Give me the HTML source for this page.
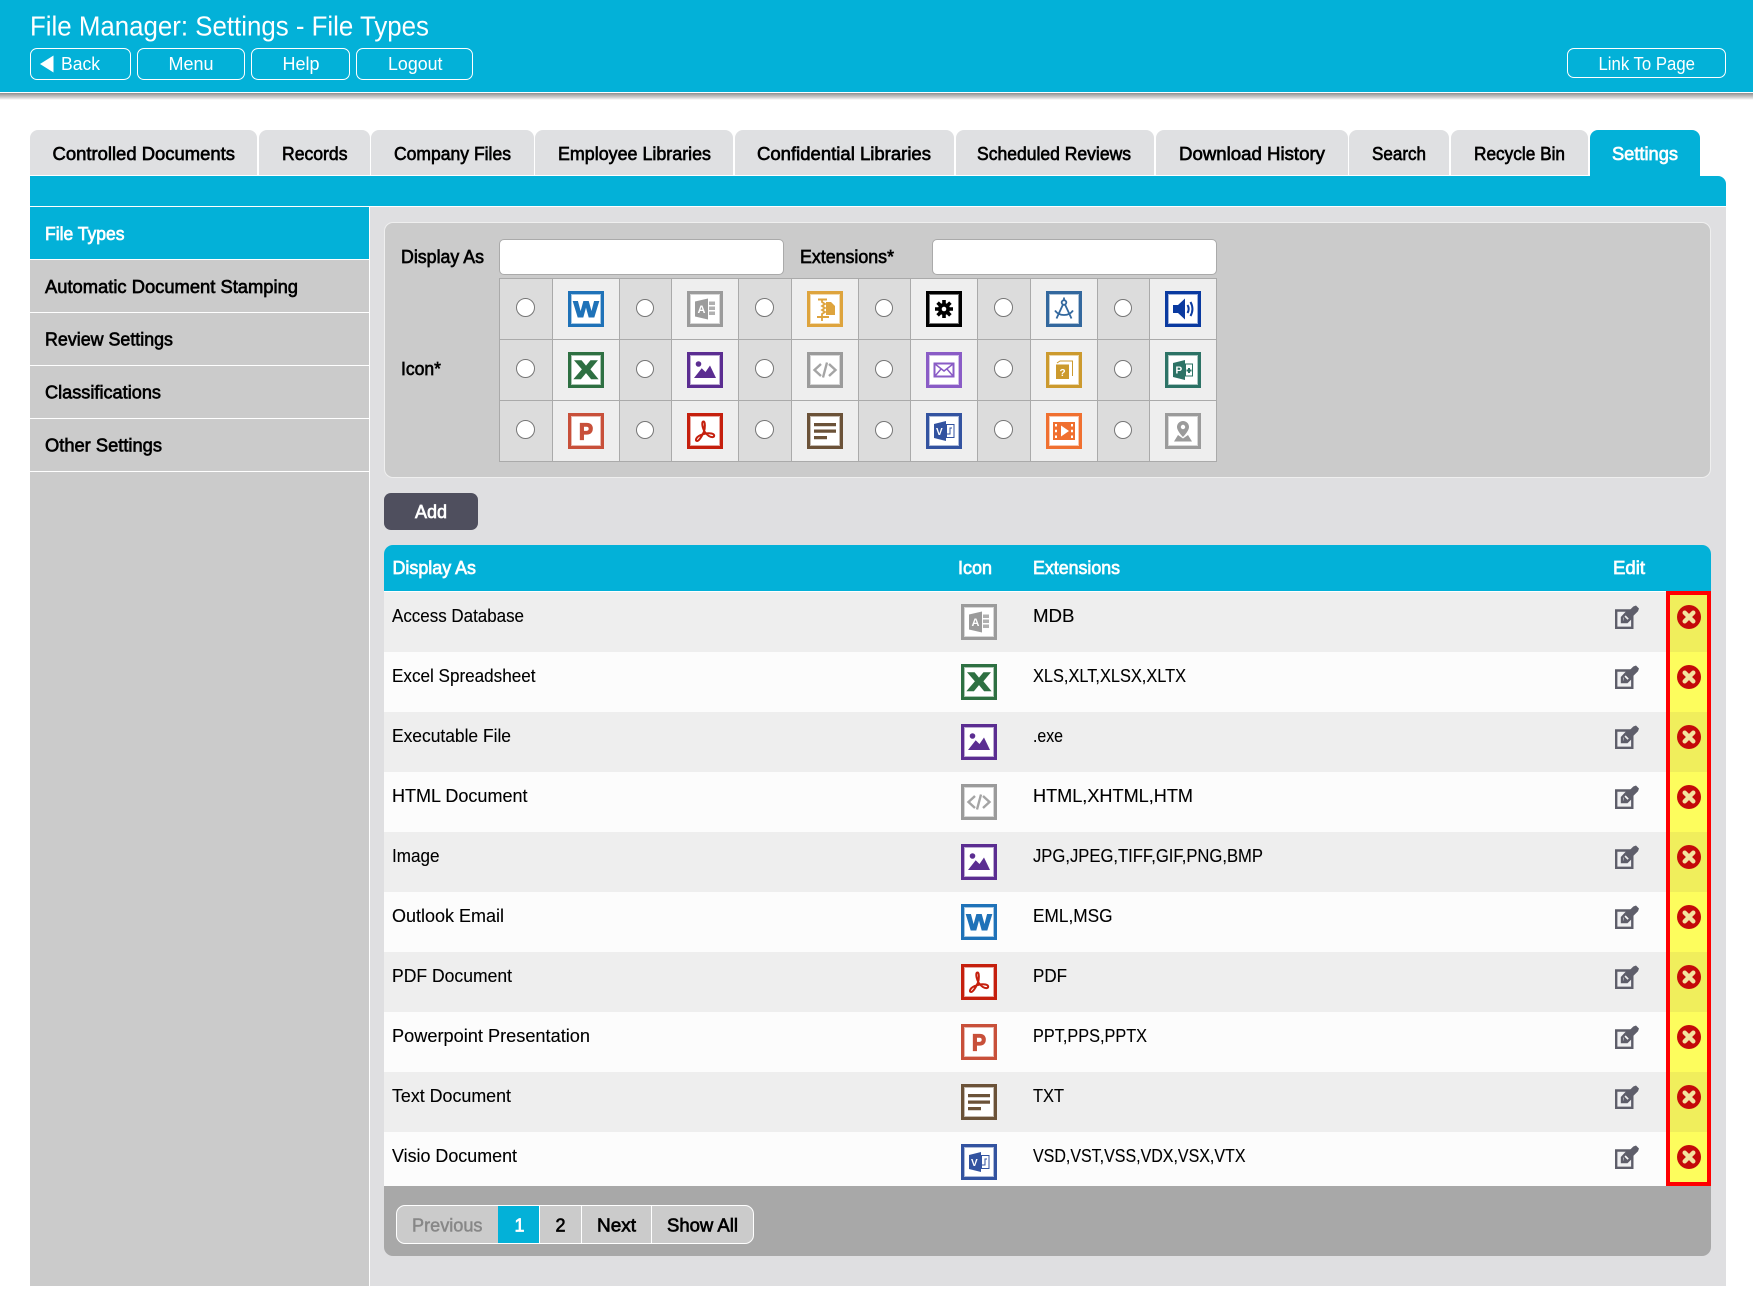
<!DOCTYPE html>
<html lang="en"><head><meta charset="utf-8"><title>File Manager: Settings - File Types</title>
<style>
html,body{margin:0;padding:0;background:#fff}
body{position:relative;width:1753px;height:1303px;overflow:hidden;font-family:"Liberation Sans",sans-serif}
.a{position:absolute;box-sizing:border-box}
.hb{border:1px solid #fff;border-radius:7px;top:48px;height:32px}
.tab{top:130px;height:45px;background:#dfe0e2;border-radius:8px 8px 0 0}
.side{left:30px;width:339px;height:53px;background:#cbcbcb;border-bottom:1px solid #fff}
.col{top:279px;height:182px;background:#dcdcdc}
.vl{top:278px;height:184px;width:1px;background:#aaa}
.hl{left:499px;width:718px;height:1px;background:#aaa}
input[type=text]{position:absolute;box-sizing:border-box;top:239px;height:36px;background:#fff;border:1px solid #aaa;border-radius:5px;margin:0;padding:0}
input[type=radio]{position:absolute;margin:0}
#o{position:absolute;left:0;top:0;z-index:5}
text{font-family:"Liberation Sans",sans-serif;font-size:18px;fill:#000;white-space:pre}
.w{fill:#fff}
.t{font-size:18.5px}
.s{stroke:#000;stroke-width:.65px}
.sw{fill:#fff;stroke:#fff;stroke-width:.7px}
.hw{fill:#fff;font-size:18.5px}
.g{font-weight:bold;font-size:10px}
.b{stroke:#000;stroke-width:.12px}
</style></head><body>

<div class="a" style="left:0;top:0;width:1753px;height:92px;background:#03b1d8"></div>
<div class="a" style="left:0;top:92px;width:1753px;height:1px;background:#fff"></div>
<div class="a" style="left:0;top:93px;width:1753px;height:7px;background:linear-gradient(#8f8f8f,#d8d8d8 70%,#fff)"></div>

<div class="a hb" style="left:30px;width:101px"></div>
<div class="a hb" style="left:137px;width:108px"></div>
<div class="a hb" style="left:251px;width:99px"></div>
<div class="a hb" style="left:356px;width:117px"></div>
<div class="a hb" style="left:1567px;width:159px;height:30px"></div>

<div class="a tab" style="left:30px;width:227px"></div>
<div class="a tab" style="left:259px;width:111px"></div>
<div class="a tab" style="left:371px;width:163px"></div>
<div class="a tab" style="left:535px;width:198px"></div>
<div class="a tab" style="left:735px;width:219px"></div>
<div class="a tab" style="left:956px;width:198px"></div>
<div class="a tab" style="left:1156px;width:192px"></div>
<div class="a tab" style="left:1349px;width:100px"></div>
<div class="a tab" style="left:1451px;width:137px"></div>
<div class="a tab" style="left:1590px;width:110px;height:47px;background:#03b1d8"></div>

<div class="a" style="left:30px;top:176px;width:1696px;height:30px;background:#03b1d8;border-radius:0 8px 0 0"></div>
<div class="a" style="left:30px;top:207px;width:1696px;height:1079px;background:#dfdfe1"></div>
<div class="a" style="left:30px;top:207px;width:339px;height:1079px;background:#cbcbcb"></div>
<div class="a" style="left:369px;top:207px;width:1px;height:1079px;background:#fff"></div>

<div class="a side" style="top:207px;background:#03b1d8"></div>
<div class="a side" style="top:260px"></div>
<div class="a side" style="top:313px"></div>
<div class="a side" style="top:366px"></div>
<div class="a side" style="top:419px"></div>

<div class="a" style="left:384px;top:222px;width:1327px;height:256px;background:#cbcbcb;border:1px solid #efefef;border-radius:9px"></div>
<input type="text" style="left:499px;width:285px">
<input type="text" style="left:932px;width:285px">

<div class="a" style="left:499px;top:278px;width:718px;height:184px;background:#eee"></div>
<div class="a col" style="left:499px;width:53px"></div>
<div class="a col" style="left:619px;width:52px"></div>
<div class="a col" style="left:738px;width:53px"></div>
<div class="a col" style="left:858px;width:52px"></div>
<div class="a col" style="left:977px;width:53px"></div>
<div class="a col" style="left:1097px;width:52px"></div>
<div class="a vl" style="left:499px"></div><div class="a vl" style="left:552px"></div><div class="a vl" style="left:619px"></div><div class="a vl" style="left:671px"></div><div class="a vl" style="left:738px"></div><div class="a vl" style="left:791px"></div><div class="a vl" style="left:858px"></div><div class="a vl" style="left:910px"></div><div class="a vl" style="left:977px"></div><div class="a vl" style="left:1030px"></div><div class="a vl" style="left:1097px"></div><div class="a vl" style="left:1149px"></div><div class="a vl" style="left:1216px"></div>
<div class="a hl" style="top:278px"></div><div class="a hl" style="top:339px"></div><div class="a hl" style="top:400px"></div><div class="a hl" style="top:461px"></div>

<input type="radio" name="i" style="left:516px;top:298px;width:19px;height:19px"><input type="radio" name="i" style="left:636px;top:299px;width:18px;height:18px"><input type="radio" name="i" style="left:755px;top:298px;width:19px;height:19px"><input type="radio" name="i" style="left:875px;top:299px;width:18px;height:18px"><input type="radio" name="i" style="left:994px;top:298px;width:19px;height:19px"><input type="radio" name="i" style="left:1114px;top:299px;width:18px;height:18px">
<input type="radio" name="i" style="left:516px;top:359px;width:19px;height:19px"><input type="radio" name="i" style="left:636px;top:360px;width:18px;height:18px"><input type="radio" name="i" style="left:755px;top:359px;width:19px;height:19px"><input type="radio" name="i" style="left:875px;top:360px;width:18px;height:18px"><input type="radio" name="i" style="left:994px;top:359px;width:19px;height:19px"><input type="radio" name="i" style="left:1114px;top:360px;width:18px;height:18px">
<input type="radio" name="i" style="left:516px;top:420px;width:19px;height:19px"><input type="radio" name="i" style="left:636px;top:421px;width:18px;height:18px"><input type="radio" name="i" style="left:755px;top:420px;width:19px;height:19px"><input type="radio" name="i" style="left:875px;top:421px;width:18px;height:18px"><input type="radio" name="i" style="left:994px;top:420px;width:19px;height:19px"><input type="radio" name="i" style="left:1114px;top:421px;width:18px;height:18px">

<div class="a" style="left:384px;top:493px;width:94px;height:37px;background:#4f4f5e;border-radius:7px"></div>

<div class="a" style="left:384px;top:545px;width:1327px;height:46px;background:#03b1d8;border-radius:9px 9px 0 0"></div>
<div class="a" style="left:384px;top:591px;width:1327px;height:1px;background:#fff"></div>
<div class="a" style="left:384px;top:592px;width:1327px;height:594px;background:linear-gradient(#eee 50%,#fcfcfc 50%) 0 0/100% 120px"></div>
<div class="a" style="left:1666px;top:591px;width:45px;height:595px;border:4px solid #f00;background:linear-gradient(#f0ee5c 50%,#fdfd5d 50%) 0 -3px/100% 120px"></div>
<div class="a" style="left:384px;top:1186px;width:1327px;height:70px;background:#a8a8a8;border-radius:0 0 9px 9px"></div>
<div class="a" style="left:396px;top:1205px;width:358px;height:39px;background:#cbcbcb;border:1px solid #fff;border-radius:9px"></div>
<div class="a" style="left:498px;top:1206px;width:41px;height:37px;background:#03b1d8"></div>
<div class="a" style="left:539px;top:1206px;width:1px;height:37px;background:#fff"></div>
<div class="a" style="left:581px;top:1206px;width:1px;height:37px;background:#fff"></div>
<div class="a" style="left:651px;top:1206px;width:1px;height:37px;background:#fff"></div>

<svg id="o" width="1753" height="1303" viewBox="0 0 1753 1303" xmlns="http://www.w3.org/2000/svg">
<defs>
<symbol id="word" viewBox="0 0 36 36"><rect x="1.5" y="1.5" width="33" height="33" fill="#fff" stroke="#1f72b8" stroke-width="3"/><rect x="3.5" y="3.5" width="29" height="29" fill="none" stroke="#1f72b8" stroke-opacity=".4"/><text x="5.500" y="26" textLength="25" lengthAdjust="spacingAndGlyphs" style="font-size:22px;font-weight:bold;fill:#1f72b8;stroke:#1f72b8;stroke-width:1.100px">W</text></symbol>
<symbol id="access" viewBox="0 0 36 36"><rect x="1.5" y="1.5" width="33" height="33" fill="#fff" stroke="#9b9b9b" stroke-width="3"/><rect x="3.5" y="3.5" width="29" height="29" fill="none" stroke="#9b9b9b" stroke-opacity=".4"/><path d="M8 10.500l13-3v21l-13-3z" fill="#9b9b9b"/><text x="10.500" y="22" style="font-weight:bold;font-size:11px;fill:#fff">A</text><path d="M22 10.500h6v3.500h-6zM22 15.500h6v3.500h-6zM22 20.500h6v3.500h-6z" fill="#b0b0b0"/></symbol>
<symbol id="zip" viewBox="0 0 36 36"><rect x="1.5" y="1.500" width="33" height="33" fill="#fff" stroke="#dea43d" stroke-width="3"/><rect x="3.500" y="3.500" width="29" height="29" fill="none" stroke="#dea43d" stroke-opacity=".4"/><path d="M11 7.500h9v2h-9zM10 25h12v2H10z" fill="#dea43d"/><path d="M15 9.500v1.500l3 2-3 2 3 2-3 2 3 2-3 2v7" fill="none" stroke="#dea43d" stroke-width="1.800"/><path d="M19 11h5l4 4v9h-9z" fill="#dea43d"/></symbol>
<symbol id="exe" viewBox="0 0 36 36"><rect x="1.500" y="1.500" width="33" height="33" fill="#fff" stroke="#000" stroke-width="3"/><rect x="3.500" y="3.500" width="29" height="29" fill="none" stroke="#777"/><circle cx="18" cy="18" r="6" fill="#000"/><path d="M18 9v18M9 18h18M11.600 11.600l12.800 12.800M24.400 11.600l-12.800 12.800" stroke="#000" stroke-width="3.600"/><circle cx="18" cy="18" r="2.300" fill="#fff"/></symbol>
<symbol id="cad" viewBox="0 0 36 36"><rect x="1.500" y="1.500" width="33" height="33" fill="#fff" stroke="#33689e" stroke-width="3"/><rect x="3.500" y="3.500" width="29" height="29" fill="none" stroke="#33689e" stroke-opacity=".4"/><g fill="none" stroke="#33689e" stroke-width="1.800"><circle cx="18" cy="11.500" r="2.300"/><path d="M17 13.500l-6.500 14M19 13.500l6.500 14M9 19.500c2 3 5 4.500 9 4.500s7-1.500 9-4.500M18 6.500v2.500"/></g></symbol>
<symbol id="audio" viewBox="0 0 36 36"><rect x="1.500" y="1.500" width="33" height="33" fill="#fff" stroke="#0a3aa0" stroke-width="3"/><rect x="3.500" y="3.500" width="29" height="29" fill="none" stroke="#0a3aa0" stroke-opacity=".4"/><path d="M8 14h5l7-6.500v21l-7-6.500H8z" fill="#0a3aa0"/><path d="M22.500 14c1.500 2.500 1.500 5.500 0 8M25.500 11c2.500 4.500 2.500 9.500 0 14" fill="none" stroke="#0a3aa0" stroke-width="2"/></symbol>
<symbol id="excel" viewBox="0 0 36 36"><rect x="1.500" y="1.500" width="33" height="33" fill="#fff" stroke="#2e7042" stroke-width="3"/><rect x="3.500" y="3.500" width="29" height="29" fill="none" stroke="#2e7042" stroke-opacity=".4"/><text x="7" y="26.500" textLength="22" lengthAdjust="spacingAndGlyphs" style="font-size:25px;font-weight:bold;fill:#2e7042;stroke:#2e7042;stroke-width:1.600px">X</text></symbol>
<symbol id="image" viewBox="0 0 36 36"><rect x="1.500" y="1.500" width="33" height="33" fill="#fff" stroke="#5b2d91" stroke-width="3"/><rect x="3.500" y="3.500" width="29" height="29" fill="none" stroke="#5b2d91" stroke-opacity=".4"/><circle cx="11.500" cy="12" r="2.800" fill="#5b2d91"/><path d="M7 26l7.700-9.700 3.800 3.700 4.500-6.500 6 12.500z" fill="#5b2d91"/></symbol>
<symbol id="code" viewBox="0 0 36 36"><rect x="1.500" y="1.500" width="33" height="33" fill="#fff" stroke="#9b9b9b" stroke-width="3"/><rect x="3.500" y="3.500" width="29" height="29" fill="none" stroke="#9b9b9b" stroke-opacity=".4"/><path d="M14 12l-6.500 6 6.500 6M22 12l6.500 6-6.500 6M20 10.500l-4 15" fill="none" stroke="#a5a5a5" stroke-width="2.400"/></symbol>
<symbol id="mail" viewBox="0 0 36 36"><rect x="1.500" y="1.500" width="33" height="33" fill="#fff" stroke="#8a5cc6" stroke-width="3"/><rect x="3.500" y="3.500" width="29" height="29" fill="none" stroke="#8a5cc6" stroke-opacity=".4"/><rect x="8.500" y="11.500" width="19" height="13" fill="none" stroke="#8a5cc6" stroke-width="2"/><path d="M9 12l9 7 9-7M9 24l6.500-7.500M27 24l-6.500-7.500" fill="none" stroke="#8a5cc6" stroke-width="1.500"/></symbol>
<symbol id="help" viewBox="0 0 36 36"><rect x="1.500" y="1.500" width="33" height="33" fill="#fff" stroke="#cc9a2e" stroke-width="3"/><rect x="3.500" y="3.500" width="29" height="29" fill="none" stroke="#cc9a2e" stroke-opacity=".4"/><path d="M10 12.500h13V27H10z" fill="#cc9a2e"/><path d="M11 11l3-2h12.500v15" fill="none" stroke="#cc9a2e"/><text x="13.500" y="24" class="g" style="fill:#fff">?</text></symbol>
<symbol id="project" viewBox="0 0 36 36"><rect x="1.500" y="1.500" width="33" height="33" fill="#fff" stroke="#2d7366" stroke-width="3"/><rect x="3.500" y="3.500" width="29" height="29" fill="none" stroke="#2d7366" stroke-opacity=".4"/><path d="M8 11l12-3v20l-12-3z" fill="#2d7366"/><rect x="20.500" y="12" width="7" height="12" fill="none" stroke="#2d7366"/><path d="M21.500 18.500h5M24 16v5" stroke="#2d7366" stroke-width="2"/><text x="10.500" y="21.500" class="g" style="fill:#fff">P</text></symbol>
<symbol id="ppt" viewBox="0 0 36 36"><rect x="1.500" y="1.500" width="33" height="33" fill="#fff" stroke="#c8503a" stroke-width="3"/><rect x="3.500" y="3.500" width="29" height="29" fill="none" stroke="#c8503a" stroke-opacity=".4"/><text x="11" y="26.500" textLength="14" lengthAdjust="spacingAndGlyphs" style="font-size:23px;font-weight:bold;fill:#c8503a;stroke:#c8503a;stroke-width:1.200px">P</text></symbol>
<symbol id="pdf" viewBox="0 0 36 36"><rect x="1.500" y="1.500" width="33" height="33" fill="#fff" stroke="#c51f0d" stroke-width="3"/><rect x="3.500" y="3.500" width="29" height="29" fill="none" stroke="#c51f0d" stroke-opacity=".4"/><path d="M16.500 8.500c-2 0-1.500 5 1 10 2.500 4 6 6 8.500 5.500 2-.5 1.500-3-1.500-3.500-5-.8-11 1-14 3.500-2 2-2 4-.5 4 2 0 5-5 7-9.500 1-3 1.500-10-.5-10z" fill="none" stroke="#c51f0d" stroke-width="2"/></symbol>
<symbol id="txt" viewBox="0 0 36 36"><rect x="1.500" y="1.500" width="33" height="33" fill="#fff" stroke="#6b5238" stroke-width="3"/><rect x="3.500" y="3.500" width="29" height="29" fill="none" stroke="#6b5238" stroke-opacity=".4"/><path d="M7 10h22v3.300H7zM7 16.500h22v3.300H7zM7 23h13v3.300H7z" fill="#6b5238"/></symbol>
<symbol id="visio" viewBox="0 0 36 36"><rect x="1.500" y="1.500" width="33" height="33" fill="#fff" stroke="#3353a0" stroke-width="3"/><rect x="3.500" y="3.500" width="29" height="29" fill="none" stroke="#3353a0" stroke-opacity=".4"/><path d="M8 11l12-3v20l-12-3z" fill="#3353a0"/><rect x="20.500" y="11.500" width="7.500" height="13" fill="none" stroke="#3353a0"/><path d="M21 21h3v-6h2" fill="none" stroke="#3353a0"/><text x="10" y="22" class="g" style="fill:#fff">V</text></symbol>
<symbol id="video" viewBox="0 0 36 36"><rect x="1.500" y="1.500" width="33" height="33" fill="#fff" stroke="#f07030" stroke-width="3"/><rect x="3.500" y="3.500" width="29" height="29" fill="none" stroke="#f07030" stroke-opacity=".4"/><path fill-rule="evenodd" d="M7 9h22v18H7zM9 11v2.500h2V11zM9 16.700v2.500h2v-2.500zM9 22.500V25h2v-2.500zM25 11v2.500h2V11zM25 16.700v2.500h2v-2.500zM25 22.500V25h2v-2.500zM15 12.500v11l8-5.500z" fill="#f07030"/></symbol>
<symbol id="map" viewBox="0 0 36 36"><rect x="1.500" y="1.500" width="33" height="33" fill="#fff" stroke="#9b9b9b" stroke-width="3"/><rect x="3.500" y="3.500" width="29" height="29" fill="none" stroke="#9b9b9b" stroke-opacity=".4"/><path fill-rule="evenodd" d="M18 8a6 6 0 0 0-6 6c0 4 6 10 6 10s6-6 6-10a6 6 0 0 0-6-6zM18 11.800a2.200 2.200 0 1 1 0 4.400 2.200 2.200 0 0 1 0-4.400z" fill="#9b9b9b"/><path d="M13 22l-4 6.500h18L23 22l-5 3.500z" fill="#9b9b9b"/></symbol>
<symbol id="edit" viewBox="0 0 24 24"><path d="M1.200 5.500h12.300l-6.500 7v4.500h5l5.300-5.200v11H1.200z" fill="#f0f0f2" stroke="#5e5e6a" stroke-width="2.400"/><path d="M8.300 16.700l.7-5.500 4.600 4.600zM10 9.800L18.300 1.500 21 0.500l3 3-1 2.700-8.300 8.300z" fill="#5e5e6a"/></symbol>
<symbol id="del" viewBox="0 0 24 24"><circle cx="12" cy="12" r="12" fill="#c40a0a"/><path d="M7.700 7.700l8.600 8.600M16.300 7.700l-8.600 8.600" stroke="#f3e3a0" stroke-width="4.400" stroke-linecap="round"/></symbol>
</defs>

<text class="w" x="30" y="35.500" textLength="399" lengthAdjust="spacingAndGlyphs" style="font-size:28px">File Manager: Settings - File Types</text>
<path d="M40 64l13.500-8.500v17z" fill="#fff"/>
<g class="w">
<text class="hw" x="61" y="70" textLength="39" lengthAdjust="spacingAndGlyphs">Back</text>
<text class="hw" x="168.500" y="70" textLength="45" lengthAdjust="spacingAndGlyphs">Menu</text>
<text class="hw" x="282.500" y="70" textLength="37" lengthAdjust="spacingAndGlyphs">Help</text>
<text class="hw" x="388" y="70" textLength="54.500" lengthAdjust="spacingAndGlyphs">Logout</text>
<text class="hw" x="1598.500" y="70" textLength="96.500" lengthAdjust="spacingAndGlyphs">Link To Page</text>
</g>

<g>
<text class="t s" x="52.500" y="160" textLength="182.500" lengthAdjust="spacingAndGlyphs">Controlled Documents</text>
<text class="t s" x="282" y="160" textLength="65.500" lengthAdjust="spacingAndGlyphs">Records</text>
<text class="t s" x="394" y="160" textLength="117" lengthAdjust="spacingAndGlyphs">Company Files</text>
<text class="t s" x="558" y="160" textLength="153" lengthAdjust="spacingAndGlyphs">Employee Libraries</text>
<text class="t s" x="757" y="160" textLength="174" lengthAdjust="spacingAndGlyphs">Confidential Libraries</text>
<text class="t s" x="977" y="160" textLength="154" lengthAdjust="spacingAndGlyphs">Scheduled Reviews</text>
<text class="t s" x="1179" y="160" textLength="146" lengthAdjust="spacingAndGlyphs">Download History</text>
<text class="t s" x="1372" y="160" textLength="54" lengthAdjust="spacingAndGlyphs">Search</text>
<text class="t s" x="1474" y="160" textLength="91" lengthAdjust="spacingAndGlyphs">Recycle Bin</text>
<text class="t sw" x="1612" y="160" textLength="66" lengthAdjust="spacingAndGlyphs">Settings</text>
</g>

<g>
<text class="t sw" x="45" y="240" textLength="79.500" lengthAdjust="spacingAndGlyphs">File Types</text>
<text class="t s" x="45" y="293" textLength="253" lengthAdjust="spacingAndGlyphs">Automatic Document Stamping</text>
<text class="t s" x="45" y="345.500" textLength="128" lengthAdjust="spacingAndGlyphs">Review Settings</text>
<text class="t s" x="45" y="398.500" textLength="116" lengthAdjust="spacingAndGlyphs">Classifications</text>
<text class="t s" x="45" y="451.500" textLength="117" lengthAdjust="spacingAndGlyphs">Other Settings</text>
</g>

<text class="t s" x="401" y="263" textLength="83" lengthAdjust="spacingAndGlyphs">Display As</text>
<text class="t s" x="800" y="263" textLength="94" lengthAdjust="spacingAndGlyphs">Extensions*</text>
<text class="t s" x="401" y="375" textLength="40" lengthAdjust="spacingAndGlyphs">Icon*</text>

<use href="#word" x="568" y="291" width="36" height="36"/><use href="#access" x="687" y="291" width="36" height="36"/><use href="#zip" x="807" y="291" width="36" height="36"/><use href="#exe" x="926" y="291" width="36" height="36"/><use href="#cad" x="1046" y="291" width="36" height="36"/><use href="#audio" x="1165" y="291" width="36" height="36"/>
<use href="#excel" x="568" y="352" width="36" height="36"/><use href="#image" x="687" y="352" width="36" height="36"/><use href="#code" x="807" y="352" width="36" height="36"/><use href="#mail" x="926" y="352" width="36" height="36"/><use href="#help" x="1046" y="352" width="36" height="36"/><use href="#project" x="1165" y="352" width="36" height="36"/>
<use href="#ppt" x="568" y="413" width="36" height="36"/><use href="#pdf" x="687" y="413" width="36" height="36"/><use href="#txt" x="807" y="413" width="36" height="36"/><use href="#visio" x="926" y="413" width="36" height="36"/><use href="#video" x="1046" y="413" width="36" height="36"/><use href="#map" x="1165" y="413" width="36" height="36"/>

<text class="t sw" x="415" y="518" textLength="32" lengthAdjust="spacingAndGlyphs">Add</text>

<text class="t sw" x="392.500" y="574" textLength="83.500" lengthAdjust="spacingAndGlyphs">Display As</text>
<text class="t sw" x="958" y="574" textLength="34" lengthAdjust="spacingAndGlyphs">Icon</text>
<text class="t sw" x="1033" y="574" textLength="87" lengthAdjust="spacingAndGlyphs">Extensions</text>
<text class="t sw" x="1613" y="574" textLength="32" lengthAdjust="spacingAndGlyphs">Edit</text>

<g class="b">
<text x="392" y="622" textLength="132" lengthAdjust="spacingAndGlyphs">Access Database</text><text x="1033" y="622" textLength="41.500" lengthAdjust="spacingAndGlyphs">MDB</text>
<text x="392" y="682" textLength="143.500" lengthAdjust="spacingAndGlyphs">Excel Spreadsheet</text><text x="1033" y="682" textLength="153" lengthAdjust="spacingAndGlyphs">XLS,XLT,XLSX,XLTX</text>
<text x="392" y="742" textLength="119" lengthAdjust="spacingAndGlyphs">Executable File</text><text x="1033" y="742" textLength="30" lengthAdjust="spacingAndGlyphs">.exe</text>
<text x="392" y="802" textLength="135.500" lengthAdjust="spacingAndGlyphs">HTML Document</text><text x="1033" y="802" textLength="160" lengthAdjust="spacingAndGlyphs">HTML,XHTML,HTM</text>
<text x="392" y="862" textLength="47.500" lengthAdjust="spacingAndGlyphs">Image</text><text x="1033" y="862" textLength="230" lengthAdjust="spacingAndGlyphs">JPG,JPEG,TIFF,GIF,PNG,BMP</text>
<text x="392" y="922" textLength="112" lengthAdjust="spacingAndGlyphs">Outlook Email</text><text x="1033" y="922" textLength="79.500" lengthAdjust="spacingAndGlyphs">EML,MSG</text>
<text x="392" y="982" textLength="120" lengthAdjust="spacingAndGlyphs">PDF Document</text><text x="1033" y="982" textLength="34" lengthAdjust="spacingAndGlyphs">PDF</text>
<text x="392" y="1042" textLength="198" lengthAdjust="spacingAndGlyphs">Powerpoint Presentation</text><text x="1033" y="1042" textLength="114" lengthAdjust="spacingAndGlyphs">PPT,PPS,PPTX</text>
<text x="392" y="1102" textLength="119" lengthAdjust="spacingAndGlyphs">Text Document</text><text x="1033" y="1102" textLength="31" lengthAdjust="spacingAndGlyphs">TXT</text>
<text x="392" y="1162" textLength="125" lengthAdjust="spacingAndGlyphs">Visio Document</text><text x="1033" y="1162" textLength="212.500" lengthAdjust="spacingAndGlyphs">VSD,VST,VSS,VDX,VSX,VTX</text>
</g>

<use href="#access" x="961" y="604" width="36" height="36"/><use href="#excel" x="961" y="664" width="36" height="36"/><use href="#image" x="961" y="724" width="36" height="36"/><use href="#code" x="961" y="784" width="36" height="36"/><use href="#image" x="961" y="844" width="36" height="36"/><use href="#word" x="961" y="904" width="36" height="36"/><use href="#pdf" x="961" y="964" width="36" height="36"/><use href="#ppt" x="961" y="1024" width="36" height="36"/><use href="#txt" x="961" y="1084" width="36" height="36"/><use href="#visio" x="961" y="1144" width="36" height="36"/>

<use href="#edit" x="1615" y="605" width="24" height="24"/><use href="#edit" x="1615" y="665" width="24" height="24"/><use href="#edit" x="1615" y="725" width="24" height="24"/><use href="#edit" x="1615" y="785" width="24" height="24"/><use href="#edit" x="1615" y="845" width="24" height="24"/><use href="#edit" x="1615" y="905" width="24" height="24"/><use href="#edit" x="1615" y="965" width="24" height="24"/><use href="#edit" x="1615" y="1025" width="24" height="24"/><use href="#edit" x="1615" y="1085" width="24" height="24"/><use href="#edit" x="1615" y="1145" width="24" height="24"/>

<use href="#del" x="1677" y="605" width="24" height="24"/><use href="#del" x="1677" y="665" width="24" height="24"/><use href="#del" x="1677" y="725" width="24" height="24"/><use href="#del" x="1677" y="785" width="24" height="24"/><use href="#del" x="1677" y="845" width="24" height="24"/><use href="#del" x="1677" y="905" width="24" height="24"/><use href="#del" x="1677" y="965" width="24" height="24"/><use href="#del" x="1677" y="1025" width="24" height="24"/><use href="#del" x="1677" y="1085" width="24" height="24"/><use href="#del" x="1677" y="1145" width="24" height="24"/>

<text class="t" x="412" y="1231.500" textLength="70.500" lengthAdjust="spacingAndGlyphs" style="fill:#878787;stroke:#878787;stroke-width:.5px">Previous</text>
<text class="t sw" x="514.500" y="1231.500" textLength="10" lengthAdjust="spacingAndGlyphs">1</text>
<text class="t s" x="555.500" y="1231.500" textLength="10" lengthAdjust="spacingAndGlyphs">2</text>
<text class="t s" x="597" y="1231.500" textLength="39" lengthAdjust="spacingAndGlyphs">Next</text>
<text class="t s" x="667" y="1231.500" textLength="71" lengthAdjust="spacingAndGlyphs">Show All</text>
</svg>
</body></html>
